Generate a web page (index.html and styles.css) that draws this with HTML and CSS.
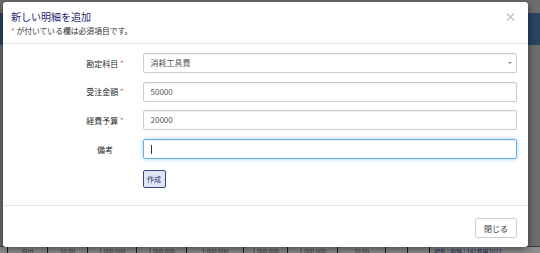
FILE: index.html
```html
<!DOCTYPE html>
<html lang="ja">
<head>
    <meta charset="UTF-8">
    <meta name="viewport" content="width=device-width, initial-scale=1.0">
    <title>新しい明細を追加</title>
    <link rel="stylesheet" href="styles.css">
</head>
<body>
<div class="page">
    <div class="navbar"></div>
    <div class="content"></div>
    <div class="tablerow">
        <span class="cell" style="width: 7px"></span>
        <span class="cell" style="width: 39px">日付</span>
        <span class="cell" style="width: 39px">10.00</span>
        <span class="cell" style="width: 48px">1,000,000</span>
        <span class="cell" style="width: 49px">1,000,000</span>
        <span class="cell" style="width: 56px">1,000,000</span>
        <span class="cell" style="width: 43px">1,000,000</span>
        <span class="cell" style="width: 49px">1,000,000</span>
        <span class="cell" style="width: 47px">10.00</span>
        <span class="cell" style="width: 21px"></span>
        <span class="cell" style="width: 21px"></span>
        <span class="cell last">編集 | 削除 | 141費用2027</span>
    </div>
</div>

<div class="modal">
    <div class="modal-header">
        <div class="modal-title">新しい明細を追加</div>
        <div class="modal-note"><span class="req">*</span> が付いている欄は必須項目です。</div>
        <svg class="close" width="9" height="8" viewBox="0 0 9 8">
            <path d="M1 0.5 L8 7.5 M8 0.5 L1 7.5" stroke="#c2c2c2" stroke-width="1.4" fill="none"/>
        </svg>
    </div>
    <div class="modal-body">
        <div class="form-row">
            <div class="label">勘定科目 <span class="req">*</span></div>
            <div class="field select">消耗工具費<span class="arrow"></span></div>
        </div>
        <div class="form-row">
            <div class="label">受注金額 <span class="req">*</span></div>
            <div class="field">50000</div>
        </div>
        <div class="form-row">
            <div class="label">経費予算 <span class="req">*</span></div>
            <div class="field">20000</div>
        </div>
        <div class="form-row">
            <div class="label">備考</div>
            <div class="field focused"><span class="caret"></span></div>
        </div>
        <div class="form-row submit-row">
            <div class="label"></div>
            <button class="btn-create">作成</button>
        </div>
    </div>
    <div class="modal-footer">
        <button class="btn-close">閉じる</button>
    </div>
</div>
</body>
</html>
```

FILE: styles.css
```css
body {
    margin: 0;
    width: 540px;
    height: 253px;
    overflow: hidden;
    font-family: "Noto Sans CJK JP", "Noto Sans", sans-serif;
    background-color: #6d6d6d;
}

.page {
    display: flex;
    flex-direction: column;
    height: 253px;
}

.navbar {
    margin-top: 13px;
    height: 32px;
    background-color: #294560;
}

.content {
    flex: 1;
}

.tablerow {
    display: flex;
    height: 6px;
    background-color: #8e8e8e;
    border-top: 1px solid #3a3a3a;
    overflow: hidden;
}

.cell {
    flex: none;
    border-right: 1px solid #1e1e1e;
    font-size: 6px;
    line-height: 10px;
    color: #2c2c2c;
    text-align: center;
    overflow: hidden;
    white-space: nowrap;
}

.cell.last {
    flex: 1;
    border-right: none;
    text-align: left;
    padding-left: 4px;
    color: #1c2a5a;
}

/* modal */

.modal {
    position: absolute;
    left: 3px;
    top: 2px;
    width: 525px;
    height: 245px;
    background-color: #fff;
    border-radius: 3px;
    box-shadow: 0 2px 8px rgba(0, 0, 0, 0.5);
    display: flex;
    flex-direction: column;
}

.modal-header {
    position: relative;
    padding: 8px 8px 7px;
    border-bottom: 1px solid #e5e5e5;
}

.modal-title {
    font-size: 10px;
    line-height: 13px;
    color: #1f2570;
}

.modal-note {
    margin-top: 2px;
    font-size: 7.8px;
    line-height: 11px;
    color: #333;
}

.req {
    color: #d9534f;
}

.close {
    position: absolute;
    right: 13px;
    top: 11px;
}

.modal-body {
    flex: 1;
    padding: 9px 11px 0 72px;
}

.form-row {
    display: flex;
    align-items: center;
    gap: 7.5px;
    margin-bottom: 8.7px;
}

.label {
    width: 60px;
    flex: none;
    text-align: center;
    font-size: 8px;
    color: #2a2a2a;
}

.field {
    flex: 1;
    position: relative;
    height: 18px;
    line-height: 18px;
    padding: 0 7px;
    border: 1px solid #ccc;
    border-radius: 2px;
    font-size: 8px;
    color: #555;
    box-shadow: inset 0 1px 1px rgba(0, 0, 0, 0.06);
}

.field.focused {
    border-color: #66afe9;
    box-shadow: inset 0 1px 1px rgba(0, 0, 0, 0.06), 0 0 4px rgba(102, 175, 233, 0.6);
}

.caret {
    display: inline-block;
    width: 1px;
    height: 9px;
    margin-top: 4.5px;
    vertical-align: top;
    background-color: #333;
}

.arrow {
    position: absolute;
    right: 4px;
    top: 8px;
    border-left: 2px solid transparent;
    border-right: 2px solid transparent;
    border-top: 2px solid #888;
}

.submit-row {
    margin-top: 11px;
}

.btn-create {
    width: 23px;
    height: 18px;
    padding: 0;
    font-family: inherit;
    font-size: 7px;
    color: #253468;
    background-color: #dfe6f6;
    border: 1px solid #34477d;
    border-radius: 2px;
}

.modal-footer {
    display: flex;
    justify-content: flex-end;
    padding: 12px 11px 9px;
    border-top: 1px solid #e5e5e5;
}

.btn-close {
    width: 42px;
    height: 20px;
    padding: 0;
    font-family: inherit;
    font-size: 8px;
    color: #333;
    background-color: #fff;
    border: 1px solid #ccc;
    border-radius: 3px;
}
```
